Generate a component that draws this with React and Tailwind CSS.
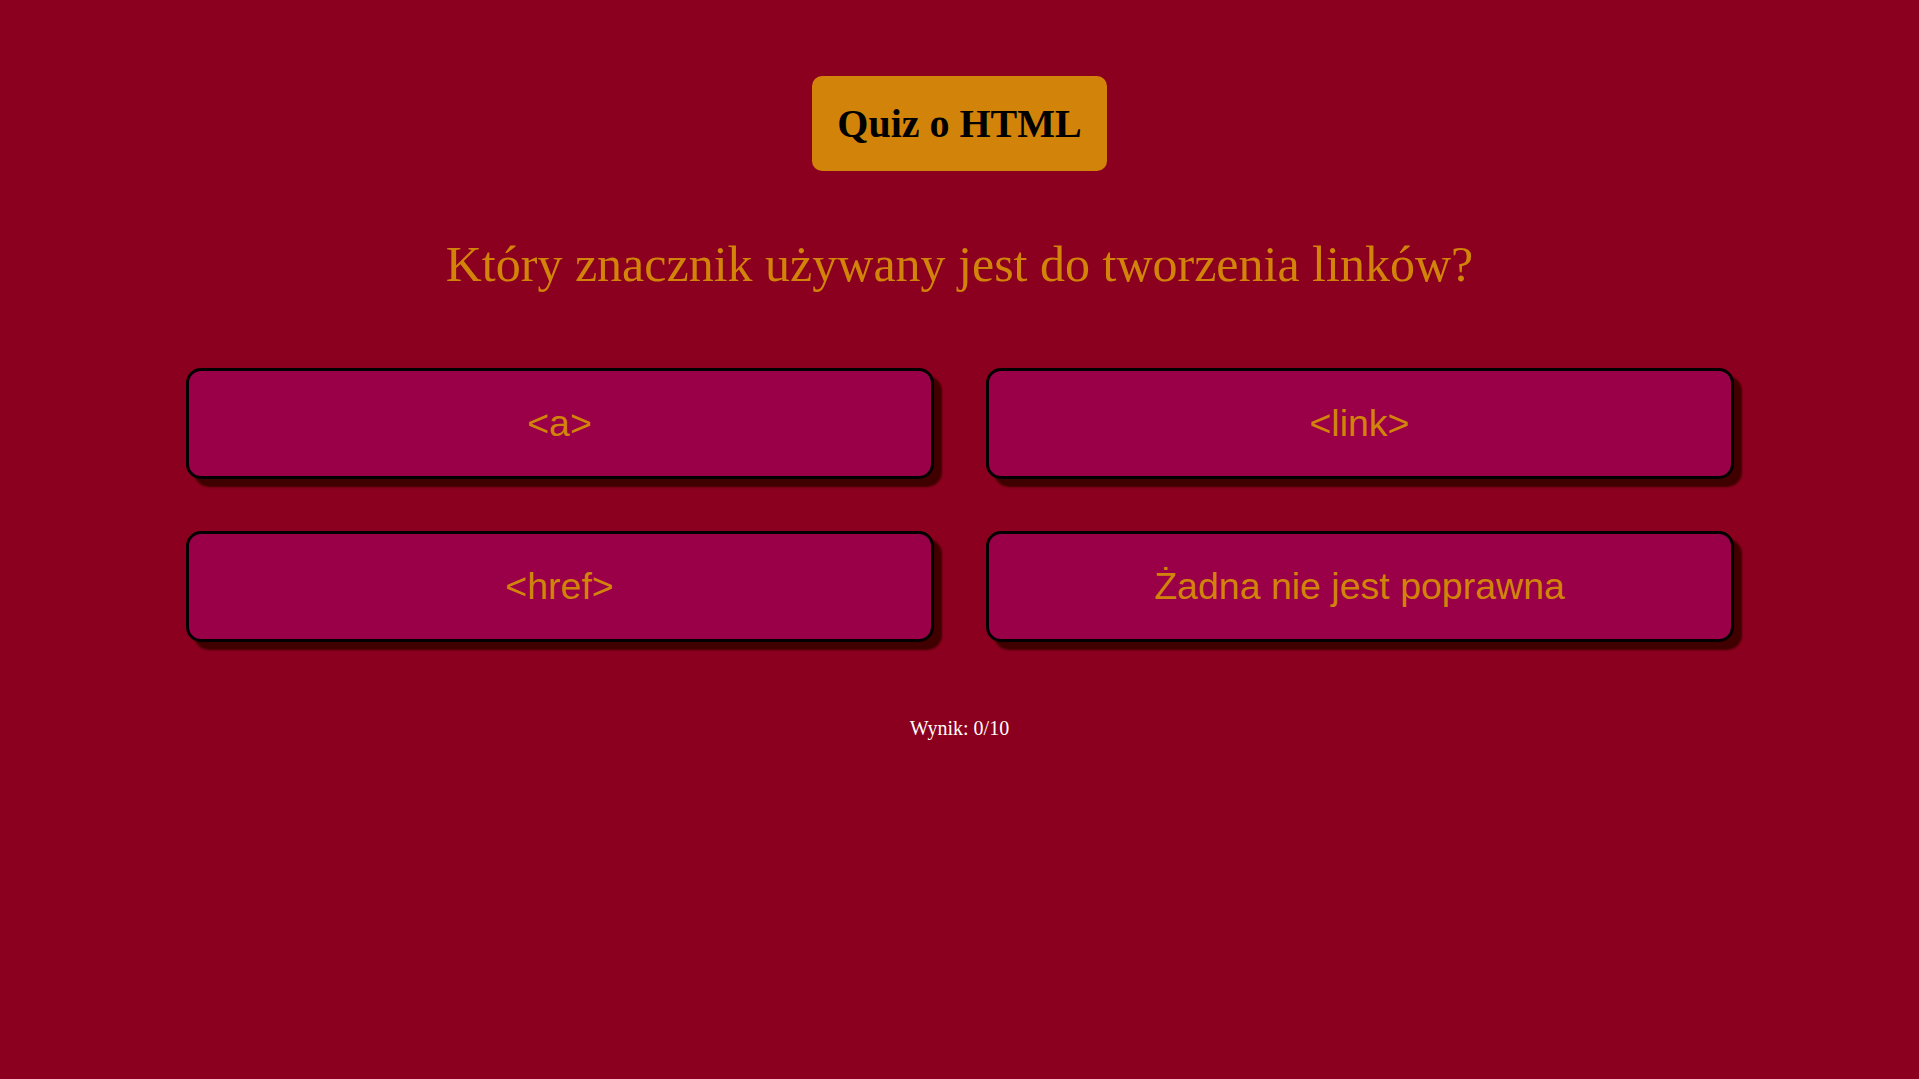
import React from 'react';

const answers = ['<a>', '<link>', '<href>', 'Żadna nie jest poprawna'];

export default function App() {
  return (
    <div className="min-h-screen w-full bg-[#8b001e] flex flex-col items-center" style={{ fontFamily: '"Liberation Serif", serif' }}>
      <h1 className="mt-[76px] rounded-[10px] bg-[#d2840a] px-[25px] py-[24px] text-[40px] font-bold leading-[47px] text-black">
        Quiz o HTML
      </h1>

      <h2 className="mt-[64px] text-[50px] leading-[58px] font-normal text-[#d2840a]">
        Który znacznik używany jest do tworzenia linków?
      </h2>

      <div className="mt-[75px] grid grid-cols-[748px_748px] gap-x-[52px] gap-y-[52px]">
        {answers.map((a) => (
          <button
            key={a}
            type="button"
            className="h-[111px] rounded-[15px] border-[3px] border-black bg-[#990047] text-[37.5px] text-[#d2840a] shadow-[8px_8px_2px_#400000]"
            style={{ fontFamily: '"Liberation Sans", sans-serif' }}
          >
            {a}
          </button>
        ))}
      </div>

      <p className="mt-[75px] text-[20px] leading-[23px] text-white">Wynik: 0/10</p>
    </div>
  );
}
